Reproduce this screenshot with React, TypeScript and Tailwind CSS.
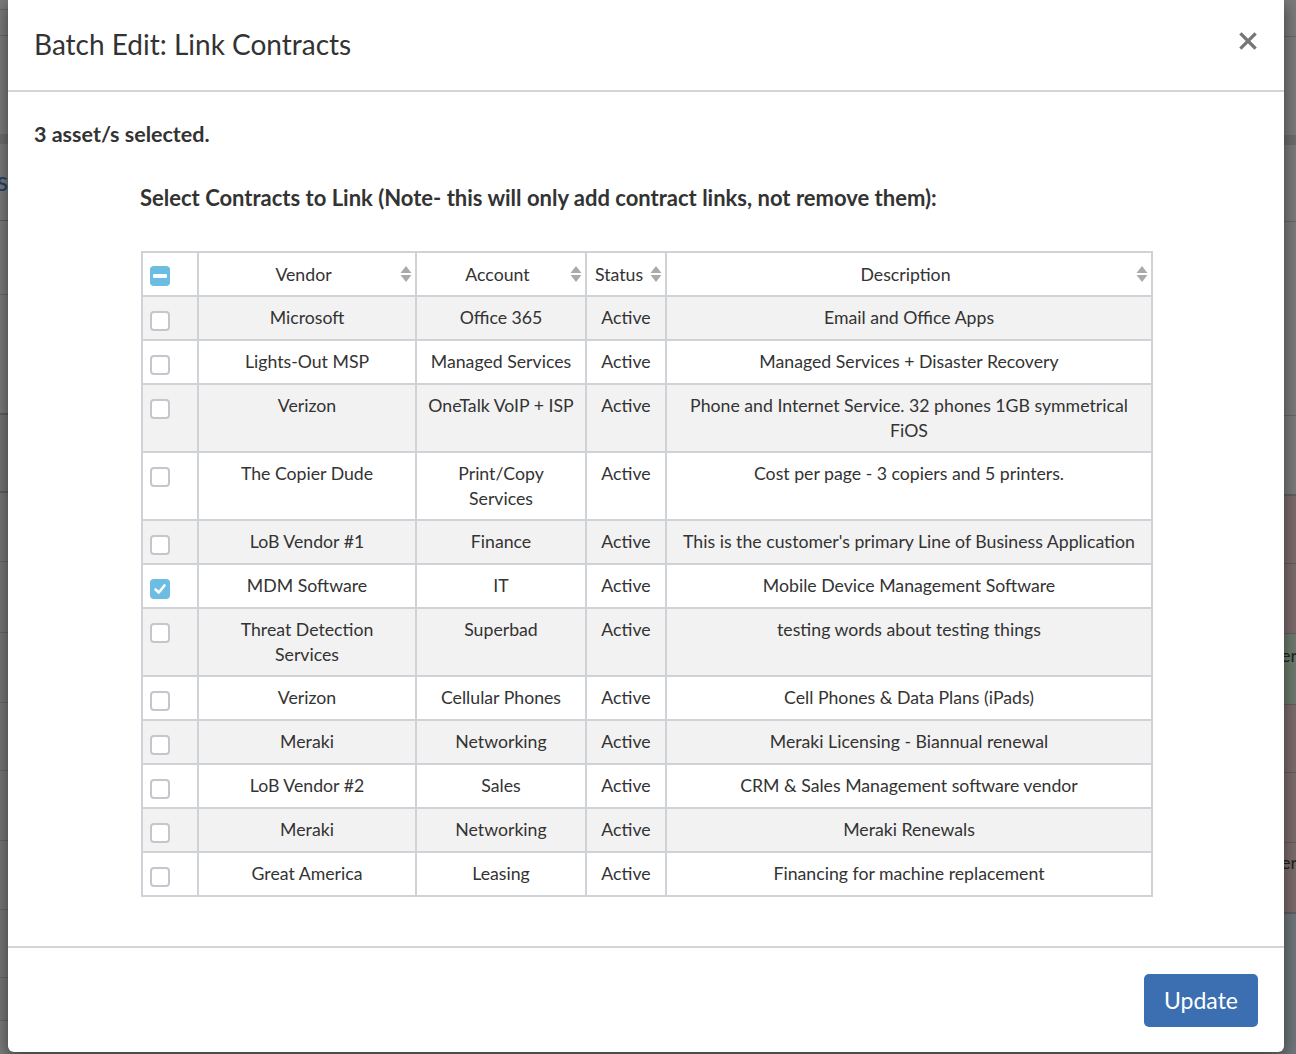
import React, { useState } from 'react';

interface Contract {
  vendor: string;
  account: string;
  status: string;
  description: string;
}

// line breaks follow the column wraps seen in the original dialog
const contracts: Contract[] = [
  { vendor: 'Microsoft', account: 'Office 365', status: 'Active', description: 'Email and Office Apps' },
  { vendor: 'Lights-Out MSP', account: 'Managed Services', status: 'Active', description: 'Managed Services + Disaster Recovery' },
  { vendor: 'Verizon', account: 'OneTalk VoIP + ISP', status: 'Active', description: 'Phone and Internet Service. 32 phones 1GB symmetrical\nFiOS' },
  { vendor: 'The Copier Dude', account: 'Print/Copy\nServices', status: 'Active', description: 'Cost per page - 3 copiers and 5 printers.' },
  { vendor: 'LoB Vendor #1', account: 'Finance', status: 'Active', description: "This is the customer's primary Line of Business Application" },
  { vendor: 'MDM Software', account: 'IT', status: 'Active', description: 'Mobile Device Management Software' },
  { vendor: 'Threat Detection\nServices', account: 'Superbad', status: 'Active', description: 'testing words about testing things' },
  { vendor: 'Verizon', account: 'Cellular Phones', status: 'Active', description: 'Cell Phones & Data Plans (iPads)' },
  { vendor: 'Meraki', account: 'Networking', status: 'Active', description: 'Meraki Licensing - Biannual renewal' },
  { vendor: 'LoB Vendor #2', account: 'Sales', status: 'Active', description: 'CRM & Sales Management software vendor' },
  { vendor: 'Meraki', account: 'Networking', status: 'Active', description: 'Meraki Renewals' },
  { vendor: 'Great America', account: 'Leasing', status: 'Active', description: 'Financing for machine replacement' },
];

function SortIcon() {
  return (
    <svg width="12" height="18" viewBox="0 0 12 18" className="shrink-0">
      <path d="M6 1 L11.5 8 L0.5 8 Z" fill="#aaaaaa" />
      <path d="M6 17 L11.5 10 L0.5 10 Z" fill="#aaaaaa" />
    </svg>
  );
}

function Checkbox({ state, onClick }: { state: 'off' | 'on' | 'some'; onClick?: () => void }) {
  if (state === 'off') {
    return (
      <button
        onClick={onClick}
        className="block w-5 h-5 rounded-[4px] border-2 border-[#c3c7cb] bg-white"
      />
    );
  }
  return (
    <button onClick={onClick} className="flex items-center justify-center w-5 h-5 rounded-[4px] bg-[#6cbde3]">
      {state === 'on' ? (
        <svg width="14" height="14" viewBox="0 0 14 14">
          <path d="M2.5 7.5 L5.8 10.5 L11.5 3.5" fill="none" stroke="white" strokeWidth="2.6" strokeLinecap="round" strokeLinejoin="round" />
        </svg>
      ) : (
        <span className="block w-[14px] h-[4px] bg-white rounded-[1px]" />
      )}
    </button>
  );
}

export default function App() {
  const [checked, setChecked] = useState<boolean[]>(contracts.map((_, i) => i === 5));
  const anyChecked = checked.some(Boolean);
  const allChecked = checked.every(Boolean);

  const toggle = (idx: number) => {
    setChecked(prev => prev.map((c, i) => (i === idx ? !c : c)));
  };

  const cell = 'border-2 border-[#cfd3d7] px-2 py-2 text-center align-top whitespace-pre-line';

  return (
    <div
      className="flex h-[1054px] w-[1296px] overflow-hidden bg-[#787878] text-[#333]"
      style={{ fontFamily: 'Lato, "Open Sans", sans-serif' }}
    >
      {/* dimmed page behind, left edge */}
      <div className="w-2 shrink-0 flex flex-col bg-[#7a7a7a]">
        <div className="h-[10px] border-b border-[#666]" />
        <div className="h-[26px] border-b border-[#666]" />
        <div className="h-[98px]" />
        <div className="h-[10px] bg-[#6c6c6c]" />
        <div className="h-[22px]" />
        <div className="h-[30px] flex justify-end overflow-hidden whitespace-nowrap text-[26px] leading-[30px] text-[#23406b]">
          Contracts
        </div>
        <div className="h-[25px] border-b border-[#5c5c5c]" />
        <div className="h-[74px] border-b border-[#666]" />
        <div className="h-[120px] border-b-2 border-[#5e5e5e]" />
        <div className="h-[78px] border-b-2 border-[#5e5e5e] bg-[#747474]" />
        {[69, 71, 70, 68, 70, 69, 68, 43].map((h, i) => (
          <div key={i} className="border-b border-[#666] bg-[#757575]" style={{ height: h }} />
        ))}
      </div>

      {/* modal */}
      <div className="w-[1276px] shrink-0 h-[1052px] flex flex-col bg-white rounded-b-md shadow-[0_5px_15px_rgba(0,0,0,0.5)] z-10">
        <div className="h-[92px] shrink-0 flex items-center justify-between pl-[26px] pr-[26px] border-b-2 border-[#d2d6da]">
          <h2 className="text-[28px] leading-8 text-[#333] pb-[2px]">Batch Edit: Link Contracts</h2>
          <button className="text-[#777] -mt-2 mr-[1px]">
            <svg width="18" height="18" viewBox="0 0 18 18">
              <path d="M2.5 2.5 L15.5 15.5 M15.5 2.5 L2.5 15.5" stroke="#777" strokeWidth="3.2" strokeLinecap="square" />
            </svg>
          </button>
        </div>

        <div className="flex-1 min-h-0 pt-[28px] px-[26px]">
          <p className="text-[21.5px] leading-7 font-bold">3 asset/s selected.</p>

          <div className="w-[1010px] mx-auto mt-[36px]">
            <h3 className="text-[22px] leading-7 font-bold -ml-[1px]">
              Select Contracts to Link (Note- this will only add contract links, not remove them):
            </h3>

            <table className="mt-[39px] w-[1010px] table-fixed border-collapse border-2 border-[#cfd3d7] text-[17.7px] leading-[25px]">
              <colgroup>
                <col className="w-[56px]" />
                <col className="w-[218px]" />
                <col className="w-[170px]" />
                <col className="w-[80px]" />
                <col className="w-[486px]" />
              </colgroup>
              <thead>
                <tr className="bg-white">
                  <th className="border-2 border-[#cfd3d7] pl-[7px] pr-1 py-2 align-top">
                    <div className="pt-[5px] h-[26px]">
                      <Checkbox
                        state={allChecked ? 'on' : anyChecked ? 'some' : 'off'}
                        onClick={() => setChecked(contracts.map(() => !anyChecked))}
                      />
                    </div>
                  </th>
                  {['Vendor', 'Account', 'Status', 'Description'].map(h => (
                    <th key={h} className="border-2 border-[#cfd3d7] py-2 pl-2 pr-[3px] font-normal align-top">
                      <div className="flex items-center h-[26px]">
                        <span className={`flex-1 ${h === 'Status' ? 'text-left' : 'text-center'}`}>{h}</span>
                        <SortIcon />
                      </div>
                    </th>
                  ))}
                </tr>
              </thead>
              <tbody>
                {contracts.map((c, idx) => (
                  <tr key={idx} className={idx % 2 === 0 ? 'bg-[#f2f2f2]' : 'bg-white'}>
                    <td className="border-2 border-[#cfd3d7] pl-[7px] pr-1 py-2 align-top">
                      <div className="pt-[6px] h-[26px]">
                        <Checkbox state={checked[idx] ? 'on' : 'off'} onClick={() => toggle(idx)} />
                      </div>
                    </td>
                    <td className={cell}>{c.vendor}</td>
                    <td className={cell}>{c.account}</td>
                    <td className={cell}>{c.status}</td>
                    <td className={cell}>{c.description}</td>
                  </tr>
                ))}
              </tbody>
            </table>
          </div>
        </div>

        <div className="shrink-0 border-t-2 border-[#d2d6da] pt-[26px] pb-[25px] pr-[26px] flex justify-end">
          <button className="w-[114px] h-[53px] rounded-[5px] bg-[#3b6fb1] text-white text-[23px]">
            Update
          </button>
        </div>
      </div>

      {/* dimmed page behind, right edge */}
      <div className="flex-1 flex flex-col bg-[#7a7a7a] overflow-hidden">
        <div className="h-[37px] shrink-0 border-b border-[#666]" />
        <div className="h-[98px] shrink-0" />
        <div className="h-[10px] shrink-0 bg-[#6c6c6c]" />
        <div className="h-[77px] shrink-0 border-b border-[#666]" />
        <div className="h-[194px] shrink-0 border-b border-[#666]" />
        <div className="h-[80px] shrink-0 bg-[#7a7a7a] border-b-2 border-[#5e5e5e]" />
        <div className="h-[68px] shrink-0 bg-[#7b6b6b] border-b border-[#5e5e5e]" />
        <div className="h-[70px] shrink-0 bg-[#7b6b6b] border-b border-[#5e5e5e]" />
        <div className="h-[71px] shrink-0 bg-[#6c7a6c] border-b border-[#5e5e5e] pt-[8px] whitespace-nowrap text-[18px] leading-[26px] text-[#222]">
          <span className="block -ml-[3px]">er</span>
        </div>
        <div className="h-[68px] shrink-0 bg-[#7b6b6b] border-b border-[#5e5e5e]" />
        <div className="h-[70px] shrink-0 bg-[#7b6b6b] border-b border-[#5e5e5e]" />
        <div className="h-[71px] shrink-0 bg-[#7b6b6b] border-b-2 border-[#5e5e5e] pt-[6px] whitespace-nowrap text-[18px] leading-[26px] text-[#222]">
          <span className="block -ml-[3px]">er</span>
        </div>
        <div className="flex-1 bg-[#6e767b]" />
      </div>
    </div>
  );
}
